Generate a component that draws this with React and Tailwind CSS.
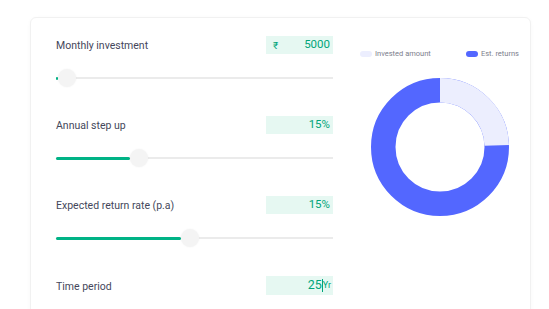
import React from "react";

const rows = [
  { label: "Monthly investment", value: "5000", prefix: "₹", pct: 0.007 },
  { label: "Annual step up", value: "15", suffix: "%", pct: 0.286 },
  { label: "Expected return rate (p.a)", value: "15", suffix: "%", pct: 0.483 },
];

function Slider({ pct }) {
  // thumb is 18px, track runs the full 277px column
  const left = 9 + pct * 259;
  return (
    <div className="relative h-[18px] mt-[15px]">
      <div className="absolute left-0 right-0 top-[8px] h-[2px] bg-[#ebebeb]" />
      <div
        className="absolute left-0 top-[8px] h-[3px] bg-[#00b386] rounded-full"
        style={{ width: Math.max(left - 9, 2) }}
      />
      <div
        className="absolute top-0 w-[18px] h-[18px] rounded-full bg-[#f4f4f4] shadow-[0_0_2px_rgba(0,0,0,0.06)]"
        style={{ left: left - 9 }}
      />
    </div>
  );
}

function ValueBox({ prefix, value, suffix }) {
  return (
    <div className="w-[67px] h-[18px] bg-[#e6f8f2] flex items-center pl-[4px] pr-[3px] text-[#00a57a] text-[11.5px]">
      {prefix && <span className="text-[10px] ml-[3px]">{prefix}</span>}
      <span className="ml-auto">{value}</span>
      {suffix && <span>{suffix}</span>}
    </div>
  );
}

export default function App() {
  return (
    <div
      className="w-[549px] h-[309px] overflow-hidden bg-white pt-[17px] pl-[30px]"
      style={{ fontFamily: "Roboto, 'Noto Sans', sans-serif" }}
    >
      <div className="w-[501px] h-[320px] rounded-[6px] border border-[#f1f1f1] shadow-[0_1px_4px_rgba(0,0,0,0.03)] flex pt-[18px] pl-[25px]">
        <div className="w-[277px] flex flex-col">
          {rows.map((r) => (
            <div key={r.label} className="mb-[29px]">
              <div className="flex items-center justify-between h-[18px]">
                <span className="text-[10.5px] text-[#44475b] mt-[2px]">{r.label}</span>
                <ValueBox prefix={r.prefix} value={r.value} suffix={r.suffix} />
              </div>
              <Slider pct={r.pct} />
            </div>
          ))}
          <div className="flex items-center justify-between h-[19px]">
            <span className="text-[10.5px] text-[#44475b] mt-[2px]">Time period</span>
            <div className="w-[67px] h-[19px] bg-[#e6f8f2] flex items-center justify-end pr-[2px] text-[#00a57a]">
              <span className="text-[12.5px]">25</span>
              <span className="w-px h-[13px] bg-[#00a57a]" />
              <span className="text-[9px]">Yr</span>
            </div>
          </div>
        </div>

        <div className="ml-[27px] w-[159px] flex flex-col">
          <div className="flex items-center justify-between h-[10px] mt-[13px] text-[7.5px] text-[#7c7e8c]">
            <div className="flex items-center gap-[3px]">
              <span className="w-[12px] h-[6px] rounded-full bg-[#eceefe]" />
              <span>Invested amount</span>
            </div>
            <div className="flex items-center gap-[3px]">
              <span className="w-[12px] h-[6px] rounded-full bg-[#5367ff]" />
              <span>Est. returns</span>
            </div>
          </div>
          <div className="mt-[19px] flex justify-center">
            <svg width="138" height="138" viewBox="0 0 138 138">
              <circle cx="69" cy="69" r="56.75" fill="none" stroke="#5367ff" strokeWidth="24.5" />
              <circle
                cx="69"
                cy="69"
                r="56.75"
                fill="none"
                stroke="#eceefe"
                strokeWidth="24.5"
                strokeDasharray="87.4 400"
                transform="rotate(-90 69 69)"
              />
            </svg>
          </div>
        </div>
      </div>
    </div>
  );
}
